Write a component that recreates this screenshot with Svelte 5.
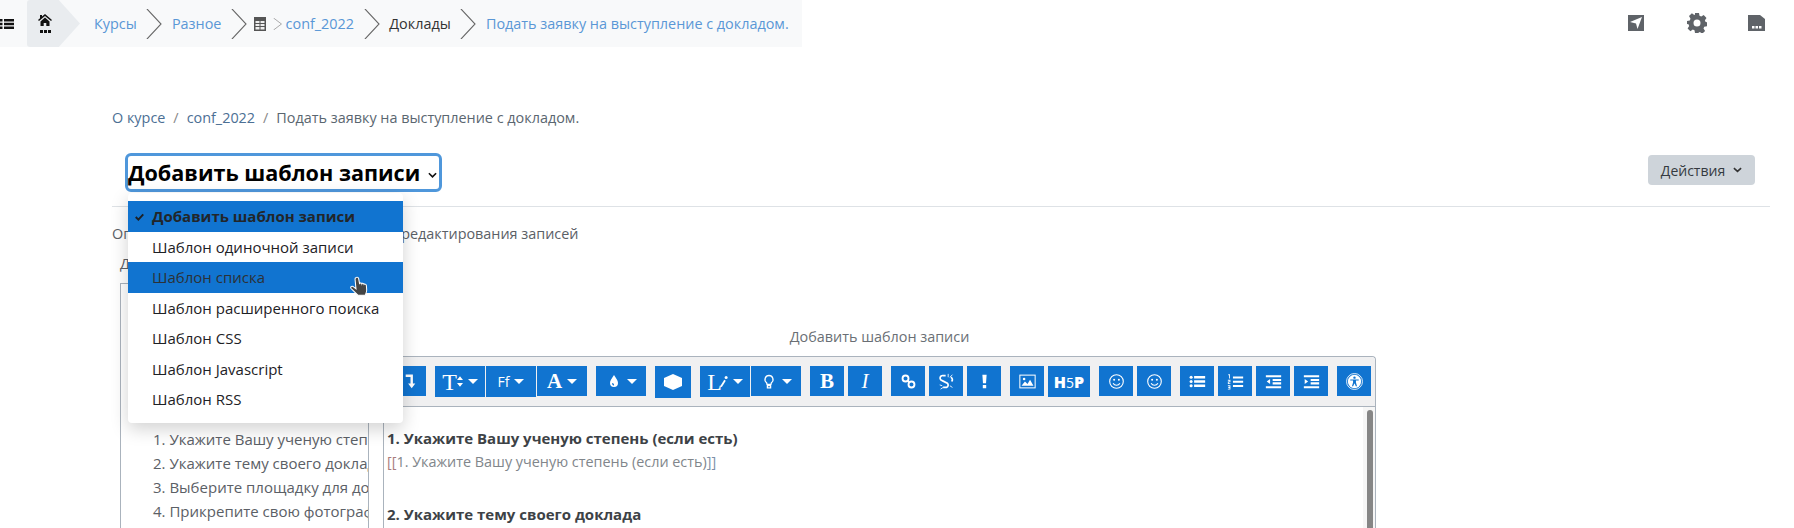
<script>
  const menuItems = [
    { label: 'Добавить шаблон записи', active: true },
    { label: 'Шаблон одиночной записи' },
    { label: 'Шаблон списка', hover: true },
    { label: 'Шаблон расширенного поиска' },
    { label: 'Шаблон CSS' },
    { label: 'Шаблон Javascript' },
    { label: 'Шаблон RSS' }
  ];

  const tagList = [
    '1. Укажите Вашу ученую степень (если есть)',
    '2. Укажите тему своего доклада',
    '3. Выберите площадку для доклада',
    '4. Прикрепите свою фотографию'
  ];

  // each group is a run of joined buttons, gap between groups is bigger
  const toolbar = [
    { gap: 1, items: [{ icon: 'down', w: 43, cut: true }] },
    { gap: 1, items: [{ text: 'T', thin: true, icon: 'size', w: 50, h: 31, caret: true }, { text: 'Ff', sans: true, w: 50, h: 31, caret: true }, { text: 'A', w: 50, caret: true }] },
    { items: [{ icon: 'drop', w: 50, caret: true }] },
    { items: [{ icon: 'hex', w: 36, h: 32 }] },
    { gap: 1, items: [{ text: 'L', thin: true, icon: 'pen', w: 50, h: 31, caret: true }, { icon: 'bulb', w: 50, caret: true }] },
    { items: [{ text: 'B', w: 34 }, { text: 'I', italic: true, w: 34 }] },
    { items: [{ icon: 'link' }, { icon: 'unlink' }, { icon: 'bang' }] },
    { items: [{ icon: 'image' }, { h5p: true, w: 42, h: 31 }] },
    { items: [{ icon: 'smile' }, { icon: 'smile' }] },
    { items: [{ icon: 'ul' }, { icon: 'ol' }, { icon: 'outdent' }, { icon: 'indent' }] },
    { items: [{ icon: 'a11y' }] }
  ];

  function glyphBox(name) {
    if (name === 'size') return '0 0 8 20';
    if (name === 'pen') return '0 0 12 20';
    if (name === 'down') return '0 0 12 20';
    return '0 0 20 20';
  }
</script>

{#snippet chevron(small)}
  <svg class={small ? 'chev small' : 'chev'} viewBox="0 0 16 46" preserveAspectRatio="none" aria-hidden="true">
    <path d="M1 0 L15 23 L1 46" fill="none" stroke="#666" stroke-width="1.3" />
  </svg>
{/snippet}

{#snippet glyph(name)}
  <svg class="glyph g-{name}" viewBox={glyphBox(name)} aria-hidden="true">
    {#if name === 'down'}
      <path d="M0 2h9v11h3l-4.500 6L3 13h3V5H0z" fill="#fff" />
    {:else if name === 'size'}
      <path d="M0 8l4-5 4 5zM0 12h8l-4 5z" fill="#fff" />
    {:else if name === 'drop'}
      <path d="M10 2c3 4.500 5 7 5 10a5 5 0 0 1-10 0c0-3 2-5.500 5-10zM8 12a2 2 0 0 0 2 3v-1.500a1.500 1.500 0 0 1-1-1.500z" fill="#fff" fill-rule="evenodd" />
    {:else if name === 'hex'}
      <path d="M10 1L20 5.500v9L10 19L0 14.500v-9z" fill="#fff" />
    {:else if name === 'pen'}
      <path d="M2 17l5-8 2 1.300-5 8-2.200.7z" fill="#fff" /><circle cx="9.500" cy="6" r="2" fill="#fff" />
    {:else if name === 'bulb'}
      <path d="M10 2.500a5 5 0 0 1 3 9l-.5 2h-5l-.5-2a5 5 0 0 1 3-9zM8 15h4v3H8z" fill="none" stroke="#fff" stroke-width="1.600" />
    {:else if name === 'link'}
      <g fill="none" stroke="#fff" stroke-width="2.200"><circle cx="6.500" cy="6.500" r="3.500" /><circle cx="13.500" cy="13.500" r="3.500" /><path d="M9 9l2 2" /></g>
    {:else if name === 'unlink'}
      <g fill="none" stroke="#fff" stroke-width="2"><path d="M9 3H6a3 3 0 0 0-1 6l6 3a3 3 0 0 1-1 5H6" /><path d="M15 5a3 3 0 0 1 1 5" /></g>
      <path d="M12 1v4M17 2l-3 3M2 14l3 1M3 19l3-2M14 15l3 2" stroke="#fff" stroke-width="1" />
    {:else if name === 'bang'}
      <path d="M7.500 2h5l-.7 10H8.200zM8 14h4v4H8z" fill="#fff" />
    {:else if name === 'image'}
      <rect x="1" y="2.500" width="18" height="15" fill="none" stroke="#fff" stroke-width="1.200" />
      <path d="M3 15l4-5 3 3 3-5 4 7z" fill="#fff" /><circle cx="6" cy="7" r="1.500" fill="#fff" />
    {:else if name === 'smile'}
      <circle cx="10" cy="10" r="8" fill="none" stroke="#fff" stroke-width="1.300" />
      <circle cx="7.200" cy="8" r="1.200" fill="#fff" /><circle cx="12.800" cy="8" r="1.200" fill="#fff" />
      <path d="M6 12a4.500 4.500 0 0 0 8 0" fill="none" stroke="#fff" stroke-width="1.300" />
    {:else if name === 'ul'}
      <path d="M6 3.500h13v3H6zM6 8.500h13v3H6zM6 13.500h13v3H6z" fill="#fff" />
      <circle cx="2.500" cy="5" r="1.800" fill="#fff" /><circle cx="2.500" cy="10" r="1.800" fill="#fff" /><circle cx="2.500" cy="15" r="1.800" fill="#fff" />
    {:else if name === 'ol'}
      <path d="M7 4h12v2.500H7zM7 9h12v2.500H7zM7 14h12v2.500H7z" fill="#fff" />
      <path d="M1.500 1.500h2v5h-1V2.500h-1zM1 8h3v3H2v1h2v1H1v-3h2V9H1zM1 14.500h3v5H1v-1h2v-1H1.500v-1H3v-1H1z" fill="#fff" />
    {:else if name === 'outdent'}
      <path d="M1 2.500h18v2.500H1zM9 7h10v2.500H9zM9 11h10v2.500H9zM1 15.500h18V18H1zM6 7v6l-4-3z" fill="#fff" />
    {:else if name === 'indent'}
      <path d="M1 2.500h18v2.500H1zM9 7h10v2.500H9zM9 11h10v2.500H9zM1 15.500h18V18H1zM2 7v6l4-3z" fill="#fff" />
    {:else if name === 'a11y'}
      <circle cx="10" cy="10" r="9.400" fill="none" stroke="#fff" stroke-width="1" />
      <circle cx="10" cy="10" r="7.800" fill="#fff" />
      <circle cx="10" cy="5.500" r="1.400" fill="#1174d0" />
      <path d="M5 7.500h10v1.300h-3.300v2.500l1.300 4.200h-1.400L10 12l-1.600 3.500H7l1.300-4.200V8.800H5z" fill="#1174d0" />
    {/if}
  </svg>
{/snippet}

<div class="page">
  <header class="topbar">
    <div class="trail">
      <svg class="list-icon" viewBox="0 0 14 12" aria-hidden="true">
        <path d="M0 1h2.500v2.500H0zM4 1h10v2.500H4zM0 4.800h2.500v2.500H0zM4 4.800h10v2.500H4zM0 8.500h2.500V11H0zM4 8.500h10V11H4z" fill="#111" />
      </svg>
      <div class="home">
        <svg viewBox="0 0 14 12" aria-hidden="true">
          <path d="M7 0l7 6-1 1-6-5-6 5-1-1 2-1.700V1h2v1.600zM2.500 7.500L7 3.500l4.500 4V12H8.300V9H5.700v3H2.500z" fill="#111" />
        </svg>
        <span class="dots"><i></i><i></i><i></i></span>
      </div>
      <a class="crumb first" href="#top">Курсы</a>
      {@render chevron(false)}
      <a class="crumb" href="#top">Разное</a>
      {@render chevron(false)}
      <svg class="table-icon" viewBox="0 0 12 14" aria-hidden="true">
        <path d="M0 0h12v14H0z" fill="#555" />
        <path d="M1.500 4h4v2h-4zM6.500 4h4v2h-4zM1.500 7h4v2h-4zM6.500 7h4v2h-4zM1.500 10h4v2.500h-4zM6.500 10h4v2.500h-4z" fill="#eee" />
      </svg>
      {@render chevron(true)}
      <a class="crumb tight" href="#top">conf_2022</a>
      {@render chevron(false)}
      <span class="crumb plain">Доклады</span>
      {@render chevron(false)}
      <a class="crumb" href="#top">Подать заявку на выступление с докладом.</a>
    </div>
    <div class="tools">
      <svg viewBox="0 0 16 16" class="tool send" aria-hidden="true">
        <path d="M0 0h16v16H0z" fill="#5f6368" />
        <path d="M14 2L2 7l6 1.500L9.500 14z" fill="#fff" />
      </svg>
      <svg viewBox="0 0 20 20" class="tool gear" aria-hidden="true">
        <path fill-rule="evenodd" fill="#5f6368" d="M8 0h4l.5 2.800 1.700.8L16.700 2l2.800 2.900-1.600 2.400.7 1.700 1.400.3v4l-2.800.5-.7 1.700 1.600 2.400-2.800 2.800-2.400-1.600-1.700.7L12 20H8l-.5-2.700-1.700-.7-2.400 1.600L.6 15.400l1.600-2.400-.7-1.700L0 11V8l2.800-.5.700-1.700L2 3.100 4.900.3l2.400 1.600L8 1.600zM10 6.500a3.500 3.500 0 1 0 0 7 3.500 3.500 0 0 0 0-7z" />
      </svg>
      <svg viewBox="0 0 17 16" class="tool card" aria-hidden="true">
        <path d="M0 0h12l5 4v12H0z" fill="#5f6368" />
        <path d="M4 11h2.500v2.500H4zM7.500 11H10v2.500H7.500zM11 11h2.500v2.500H11z" fill="#fff" />
      </svg>
    </div>
  </header>

  <main class="content">
    <nav class="crumbs">
      <a href="#top">О курсе</a><span class="sep">/</span><a href="#top">conf_2022</a><span class="sep">/</span><span>Подать заявку на выступление с докладом.</span>
    </nav>

    <div class="head">
      <div class="select">
        <span>Добавить шаблон записи</span>
        <svg viewBox="0 0 10 6" aria-hidden="true"><path d="M1 1l4 4 4-4" fill="none" stroke="#111" stroke-width="1.800" /></svg>
      </div>
      <button class="actions" type="button">
        Действия
        <svg viewBox="0 0 10 6" aria-hidden="true"><path d="M1 1l4 3.500L9 1" fill="none" stroke="#333" stroke-width="1.800" /></svg>
      </button>
    </div>

    <p class="desc"><span class="lead">Определяет интерфейс для создания и </span>редактирования записей</p>
    <div class="avail">Доступные теги</div>

    <div class="workspace">
      <div class="tags">
        <ul>
          {#each tagList as tag}
            <li>{tag}</li>
          {/each}
        </ul>
      </div>

      <section class="editor-col">
        <div class="editor-title">Добавить шаблон записи</div>
        <div class="editor">
          <div class="bar">
            {#each toolbar as group}
              <div class="group" class:joined={group.gap}>
                {#each group.items as b}
                  <button type="button" class="tb" style="width: {b.w ?? 34}px; height: {b.h ?? 30}px">
                    {#if b.text}
                      <span class="letter" class:thin={b.thin} class:sans={b.sans} class:italic={b.italic}>{b.text}</span>
                    {/if}
                    {#if b.h5p}
                      <span class="h5p">H<span class="five">5</span>P</span>
                    {/if}
                    {#if b.icon}
                      {@render glyph(b.icon)}
                    {/if}
                    {#if b.caret}
                      <i class="caret"></i>
                    {/if}
                  </button>
                {/each}
              </div>
            {/each}
          </div>
          <div class="body">
            <div class="text">
              <p><b>1. Укажите Вашу ученую степень (если есть)</b></p>
              <p class="tag"><span class="br">[[</span>1. Укажите Вашу ученую степень (если есть)<span class="br2">]]</span></p>
              <p class="empty">&nbsp;</p>
              <p><b>2. Укажите тему своего доклада</b></p>
            </div>
            <div class="scroll"><i></i></div>
          </div>
        </div>
      </section>
    </div>

    <ul class="menu">
      {#each menuItems as item}
        <li class:active={item.active} class:hover={item.hover}>
          {#if item.active}
            <svg viewBox="0 0 12 10" aria-hidden="true"><path d="M1 5l3.500 3.500L11 1.500" fill="none" stroke="#1d2125" stroke-width="2.600" /></svg>
          {/if}
          {item.label}
        </li>
      {/each}
    </ul>

    <svg class="hand" viewBox="0 0 20 24" preserveAspectRatio="none" aria-hidden="true">
      <path d="M6 1.500c1-.6 2 0 2.200 1l1 6 .3-1.500c1 0 1.600.3 1.800 1.200l.2-.6c1-.2 1.700.3 1.900 1.200l.3-.4c1-.1 1.800.5 1.900 1.500l.3 4.600c.1 2.200-.5 3.700-1.400 5.500H7.500L1 13c-.6-.8-.4-1.700.3-2 .8-.4 1.700-.1 2.400.6l2 1.800L4.800 3.200c-.1-.7.400-1.400 1.200-1.700z" fill="#444" stroke="#fff" stroke-width="1" />
    </svg>
  </main>
</div>

<style>
  :global(body) {
    margin: 0;
    background: #fff;
  }

  .page {
    width: 1794px;
    height: 528px;
    overflow: hidden;
    font-family: "Open Sans", "Noto Sans", sans-serif;
    font-size: 14.4px;
    color: #5b6066;
  }

  a {
    color: inherit;
    text-decoration: none;
  }

  .topbar {
    display: flex;
    justify-content: space-between;
    height: 47px;
  }

  .trail {
    display: flex;
    align-items: center;
    width: 802px;
    background: #f8f9fa;
  }

  .list-icon {
    width: 14px;
    height: 12px;
    margin-right: 13px;
  }

  .home {
    display: flex;
    flex-direction: column;
    align-items: center;
    align-self: stretch;
    justify-content: center;
    gap: 4px;
    width: 53px;
    padding-right: 17px;
    box-sizing: border-box;
    background: #e9ecef;
    border-radius: 3px 0 0 3px;
    clip-path: polygon(0 0, 60% 0, 100% 50%, 60% 100%, 0 100%);
  }

  .home svg {
    width: 14px;
    height: 12px;
  }

  .dots {
    display: flex;
    gap: 1px;
  }

  .dots i {
    width: 3px;
    height: 3px;
    background: #111;
  }

  .crumb {
    color: #5a97d6;
    white-space: nowrap;
  }

  .crumb.first {
    margin-left: 14px;
  }

  .crumb.tight {
    margin-left: 4px;
  }

  .crumb.plain {
    color: #333;
  }

  .chev {
    width: 16px;
    height: 30px;
    margin: 0 9.600px;
    flex: none;
  }

  .chev.small {
    width: 9px;
    height: 12px;
    margin: 0 0 0 7px;
  }

  .table-icon {
    width: 12px;
    height: 14px;
    margin-left: -3px;
  }

  .tools {
    display: flex;
    align-items: flex-start;
    padding: 14px 29px 0 0;
  }

  .tool {
    width: 16px;
    height: 16px;
    margin-top: 1px;
  }

  .gear {
    width: 20px;
    height: 20px;
    margin: -1px 0 0 43px;
  }

  .card {
    width: 17px;
    height: 16px;
    margin-left: 41px;
  }

  .content {
    position: relative;
    padding: 60px 24px 0 112px;
  }

  .crumbs {
    display: flex;
    align-items: center;
    height: 20px;
    color: #5a6670;
  }

  .crumbs a {
    color: #4c6f94;
  }

  .sep {
    margin: 0 8px;
    color: #888;
  }

  .head {
    display: flex;
    justify-content: space-between;
    align-items: flex-start;
    margin-top: 26px;
    padding: 0 15px 14px 13px;
    border-bottom: 1px solid #dee2e6;
  }

  .select {
    display: flex;
    align-items: center;
    gap: 8px;
    width: 317px;
    height: 39px;
    box-sizing: border-box;
    border: 3px solid #4f97db;
    border-radius: 6px;
    font-size: 21.6px;
    font-weight: 700;
    color: #000;
    white-space: nowrap;
  }

  .select svg {
    flex: none;
    width: 9px;
    height: 6px;
    margin-top: 5px;
  }

  .actions {
    display: flex;
    align-items: center;
    gap: 8px;
    width: 107px;
    height: 30px;
    margin-top: 2px;
    justify-content: center;
    padding: 0;
    border: 0;
    border-radius: 4px;
    background: #ced4da;
    font-family: inherit;
    font-size: 14px;
    color: #343a40;
  }

  .actions svg {
    width: 9px;
    height: 6px;
  }

  .desc {
    margin: 17px 0 0;
    line-height: 20px;
  }

  .lead {
    word-spacing: 3.700px;
  }

  .avail {
    margin: 10px 0 0 8px;
    line-height: 20px;
  }

  .workspace {
    display: flex;
    margin: 9px 0 0 8px;
  }

  .tags {
    width: 249px;
    height: 245px;
    flex: none;
    box-sizing: border-box;
    border: 1px solid #aab3bd;
    border-bottom: 0;
    overflow: hidden;
    font-size: 15px;
  }

  .tags ul {
    margin: 0;
    padding: 143px 0 0 32px;
    list-style: none;
    width: 400px;
  }

  .tags li {
    line-height: 24px;
    white-space: nowrap;
  }

  .editor-col {
    width: 993px;
    margin-left: 14px;
  }

  .editor-title {
    height: 20px;
    margin-top: 44px;
    line-height: 20px;
    text-align: center;
    color: #6a6f75;
  }

  .editor {
    margin-top: 9px;
    height: 180px;
    border: 1px solid #aab3bd;
    border-bottom: 0;
    border-radius: 4px 4px 0 0;
  }

  .bar {
    display: flex;
    gap: 9px;
    height: 50px;
    box-sizing: border-box;
    margin-left: -1px;
    padding-top: 9px;
    background: #f0f0f1;
    border-bottom: 1px solid #aab3bd;
    border-radius: 4px 4px 0 0;
  }

  .group {
    display: flex;
    gap: 4px;
    align-items: flex-start;
  }

  .group.joined {
    gap: 1px;
  }

  .tb {
    display: flex;
    align-items: center;
    justify-content: center;
    gap: 5px;
    flex: none;
    padding: 0;
    border: 0;
    background: #1174d0;
    color: #fff;
  }

  .glyph {
    width: 17px;
    height: 17px;
  }

  .g-down {
    width: 11px;
    height: 16px;
    margin-left: 11px;
  }

  .g-size {
    width: 6px;
    height: 15px;
    margin-left: -5px;
  }

  .g-pen {
    width: 9px;
    height: 15px;
    margin: -3px 0 0 -8px;
  }

  .g-hex {
    width: 18px;
    height: 18px;
  }

  .g-drop,
  .g-bulb {
    width: 16px;
  }

  .letter {
    font-family: "Liberation Serif", serif;
    font-size: 21px;
    font-weight: 700;
    line-height: 1;
  }

  .letter.thin {
    font-weight: 400;
    font-size: 24px;
  }

  .letter.sans {
    font-family: "Open Sans", sans-serif;
    font-size: 14px;
    font-weight: 400;
  }

  .letter.italic {
    font-style: italic;
    font-weight: 400;
  }

  .h5p {
    font-family: "Open Sans", sans-serif;
    font-size: 16px;
    font-weight: 800;
  }

  .five {
    font-size: 14px;
    font-weight: 400;
  }

  .caret {
    width: 0;
    height: 0;
    border-left: 5px solid transparent;
    border-right: 5px solid transparent;
    border-top: 5px solid #fff;
  }

  .body {
    display: flex;
    justify-content: space-between;
  }

  .text {
    padding: 20px 0 0 3px;
    font-size: 15px;
  }

  .text p {
    margin: 0;
    line-height: 23px;
  }

  .text b {
    color: #3d4246;
  }

  .tag {
    color: #81868b;
    font-size: 14.400px;
  }

  .br {
    color: #a87c7c;
  }

  .br2 {
    color: #7c8fa8;
  }

  .empty {
    height: 30px;
  }

  .scroll {
    width: 12px;
    height: 130px;
    padding: 3px 2px 0 4px;
    box-sizing: border-box;
    background: #f6f6f6;
    overflow: hidden;
  }

  .scroll i {
    display: block;
    width: 6px;
    height: 130px;
    border-radius: 3px;
    background: #868686;
  }

  /* dropdown sits over the form */
  .menu {
    position: absolute;
    top: 146px;
    left: 128px;
    width: 275px;
    margin: 0;
    padding: 8px 0;
    box-sizing: border-box;
    list-style: none;
    background: #fff;
    border-radius: 4px;
    box-shadow: 0 6px 18px rgba(0, 0, 0, 0.18);
    color: #1d2125;
    font-size: 15px;
  }

  .menu li {
    position: relative;
    height: 30.5px;
    line-height: 30px;
    padding-left: 24px;
    white-space: nowrap;
  }

  .menu li.active {
    background: #1174d0;
    font-weight: 700;
    color: #22262a;
  }

  .menu li.hover {
    background: #1174d0;
    color: #2c3136;
  }

  .menu li svg {
    position: absolute;
    left: 7px;
    top: 12px;
    width: 9px;
    height: 8px;
  }

  .hand {
    position: absolute;
    top: 229px;
    left: 350px;
    width: 21px;
    height: 23px;
  }
</style>
